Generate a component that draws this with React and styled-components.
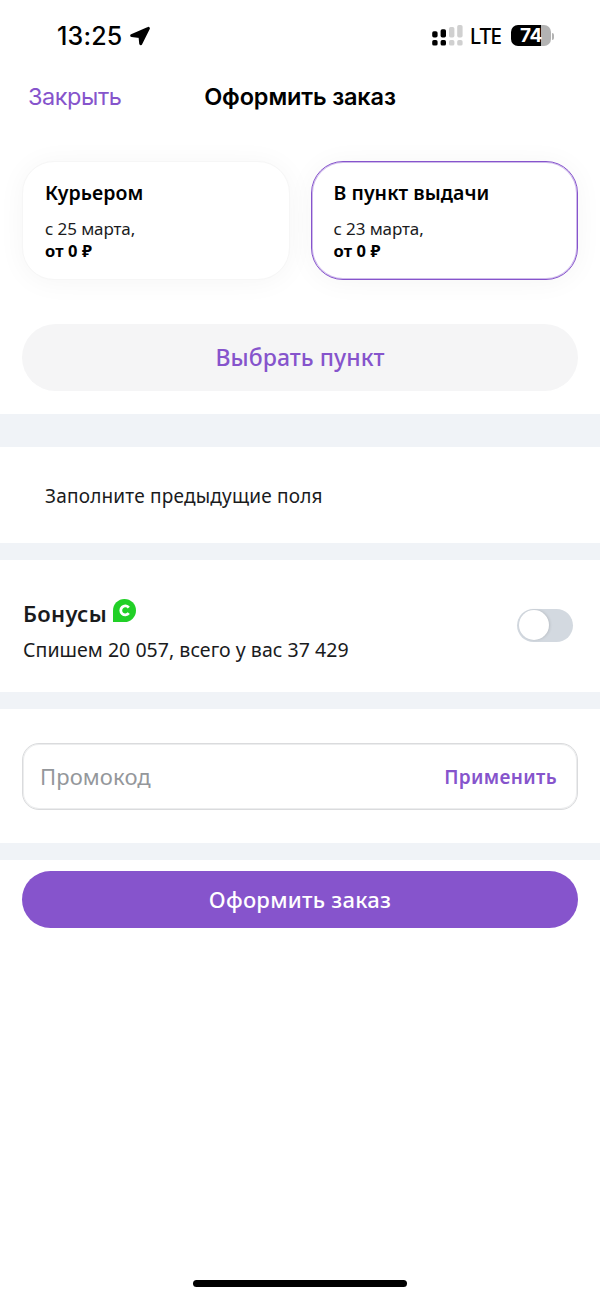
import { useState } from "react";
import styled, { createGlobalStyle } from "styled-components";

const deliveryOptions = [
    { id: "courier", title: "Курьером", date: "с 25 марта,", price: "от 0 ₽" },
    { id: "pickup", title: "В пункт выдачи", date: "с 23 марта,", price: "от 0 ₽" },
];

function StatusBar() {
    return (
        <StatusContainer>
            <StatusLeft>
                <Clock>13:25</Clock>
                <svg width="20" height="20" viewBox="0 0 20 20">
                    <path
                        d="M18.2 2 1.5 9.2c-.4.2-.3.8.2.8l7.9.9.7 6.9c.1.5.7.6.9.1L18.8 2.5c.1-.4-.2-.7-.6-.5Z"
                        fill="#000"
                        stroke="#000"
                        strokeWidth="2.1"
                        strokeLinejoin="round"
                    />
                </svg>
            </StatusLeft>

            <StatusRight>
                <svg width="31" height="22" viewBox="0 0 31 22">
                    <rect x="0.2" y="6.2" width="5.4" height="6.3" rx="1.7" />
                    <rect x="8.6" y="4.2" width="5.4" height="8.3" rx="1.7" />
                    <rect x="17" y="2" width="5.4" height="10.5" rx="1.7" fill="#d0d0d0" />
                    <rect x="25.2" y="0" width="5.4" height="12.5" rx="1.7" fill="#d0d0d0" />
                    <rect x="0.2" y="15" width="5.4" height="5.6" rx="1.7" />
                    <rect x="8.6" y="15" width="5.4" height="5.6" rx="1.7" />
                    <rect x="17" y="15" width="5.4" height="5.6" rx="1.7" fill="#d0d0d0" />
                    <rect x="25.2" y="15" width="5.4" height="5.6" rx="1.7" fill="#d0d0d0" />
                </svg>
                <Network>LTE</Network>
                <Battery>74</Battery>
                <BatteryCap />
            </StatusRight>
        </StatusContainer>
    );
}

function App() {
    const [delivery, setDelivery] = useState("pickup");
    const [useBonuses, setUseBonuses] = useState(false);
    const [promo, setPromo] = useState("");

    return (
        <Container>
            <GlobalStyle />

            <StatusBar />

            <Header>
                <CloseButton>Закрыть</CloseButton>
                <Title>Оформить заказ</Title>
            </Header>

            <DeliverySection>
                <Cards>
                    {deliveryOptions.map((option) => (
                        <Card
                            key={option.id}
                            $active={delivery === option.id}
                            onClick={() => setDelivery(option.id)}
                        >
                            <CardTitle>{option.title}</CardTitle>
                            <CardDate>{option.date}</CardDate>
                            <CardPrice>{option.price}</CardPrice>
                        </Card>
                    ))}
                </Cards>
                <PickButton>Выбрать пункт</PickButton>
            </DeliverySection>

            <Divider $height={33.5} />

            <Notice>Заполните предыдущие поля</Notice>

            <Divider $height={17} />

            <BonusSection>
                <BonusInfo>
                    <BonusTitle>
                        Бонусы
                        <svg width="23" height="23" viewBox="0 0 23 23">
                            <path d="M0 23V11.5A11.5 11.5 0 1 1 11.5 23Z" fill="#21d027" />
                            <path
                                d="M15.8 8.6A4.5 4.5 0 1 0 15.8 14.2"
                                fill="none"
                                stroke="#fff"
                                strokeWidth="2.8"
                            />
                        </svg>
                    </BonusTitle>
                    <BonusText>Спишем 20 057, всего у вас 37 429</BonusText>
                </BonusInfo>
                <Toggle $on={useBonuses} onClick={() => setUseBonuses(!useBonuses)}>
                    <Knob />
                </Toggle>
            </BonusSection>

            <Divider $height={17} />

            <PromoSection>
                <PromoField>
                    <PromoInput
                        placeholder="Промокод"
                        value={promo}
                        onChange={(e) => setPromo(e.target.value)}
                    />
                    <ApplyButton type="button">Применить</ApplyButton>
                </PromoField>
            </PromoSection>

            <Divider $height={17} />

            <Footer>
                <SubmitButton>Оформить заказ</SubmitButton>
            </Footer>

            <HomeIndicator />
        </Container>
    );
}

export default App;

const GlobalStyle = createGlobalStyle`
* {
    box-sizing: border-box;
}

body {
    margin: 0;
    background-color: white;
}

button, input {
    font-family: inherit;
    border: 0;
    padding: 0;
    background: none;
    outline: 0;
}
`;

const Container = styled.div`
width: 600px;
height: 1297px;
display: flex;
flex-direction: column;
overflow: hidden;
background-color: white;
color: #1a1b1d;
font-family: "Noto Sans", sans-serif;
`;

const StatusContainer = styled.div`
height: 72px;
flex-shrink: 0;
display: flex;
justify-content: space-between;
padding: 0 46px 0 57px;
color: black;
font-family: "Inter", sans-serif;
`;

const StatusLeft = styled.div`
display: flex;
align-items: center;
gap: 7px;
`;

const Clock = styled.span`
font-size: 25px;
font-weight: 550;
line-height: 30px;
letter-spacing: 0.2px;
`;

const StatusRight = styled.div`
display: flex;
align-items: center;
`;

const Network = styled.span`
margin-left: 7px;
padding-bottom: 1px;
font-family: "Noto Sans", sans-serif;
font-size: 21px;
font-weight: 500;
line-height: 26px;
letter-spacing: -1px;
`;

const Battery = styled.div`
width: 40px;
height: 21px;
margin: -1px 1px 0 10px;
border-radius: 7px;
background: linear-gradient(to right, black 74%, #b3b3b3 74%);
color: white;
font-size: 19px;
font-weight: 700;
line-height: 22px;
letter-spacing: -0.5px;
text-align: center;
`;

const BatteryCap = styled.div`
width: 2px;
height: 7px;
border-radius: 0 3px 3px 0;
background-color: #b3b3b3;
`;

const Header = styled.div`
height: 50px;
flex-shrink: 0;
display: grid;
grid-template-columns: 1fr auto 1fr;
align-items: center;
padding: 0 28px;
font-family: "Inter", sans-serif;
`;

const CloseButton = styled.button`
justify-self: start;
color: #8654cc;
font-size: 23.5px;
line-height: 30px;
letter-spacing: -0.45px;
`;

const Title = styled.h1`
margin: 0;
color: black;
font-size: 23.5px;
font-weight: 600;
line-height: 30px;
letter-spacing: -0.15px;
`;

const DeliverySection = styled.div`
height: 291.5px;
flex-shrink: 0;
padding: 38.5px 22px 0;
`;

const Cards = styled.div`
display: grid;
grid-template-columns: 1fr 1fr;
gap: 21px;
`;

const Card = styled.div`
height: 119px;
padding: 18px 22px 0;
border: 1px solid ${(props) => (props.$active ? "#8654cc" : "#f6f6f6")};
border-radius: 32px;
background-color: white;
box-shadow: 0 2px 28px rgba(0, 0, 0, 0.045),
    inset 0 0 0 1px ${(props) => (props.$active ? "rgba(134, 84, 204, 0.4)" : "transparent")};
`;

const CardTitle = styled.div`
color: black;
font-size: 19.5px;
font-weight: 600;
line-height: 26px;
letter-spacing: 0.05px;
`;

const CardDate = styled.div`
margin-top: 11px;
font-size: 17px;
line-height: 23px;
letter-spacing: -0.1px;
`;

const CardPrice = styled.div`
color: black;
font-size: 16.5px;
font-weight: 700;
line-height: 22px;
letter-spacing: 0.1px;
`;

const PickButton = styled.button`
display: block;
width: 100%;
height: 67px;
margin-top: 44.5px;
padding-bottom: 1px;
border-radius: 34px;
background-color: #f5f5f6;
color: #8654cc;
font-size: 23px;
font-weight: 500;
letter-spacing: 0.05px;
`;

const Divider = styled.div`
height: ${(props) => props.$height}px;
flex-shrink: 0;
background-color: #f0f3f7;
`;

const Notice = styled.div`
height: 95.5px;
flex-shrink: 0;
padding: 35px 45px 0;
font-size: 19px;
line-height: 28px;
letter-spacing: 0.2px;
`;

const BonusSection = styled.div`
height: 132.5px;
flex-shrink: 0;
display: flex;
justify-content: space-between;
padding: 39px 27px 0 23px;
`;

const BonusInfo = styled.div``;

const BonusTitle = styled.div`
display: flex;
gap: 6px;
font-size: 22px;
font-weight: 600;
line-height: 29px;
letter-spacing: 0.3px;
`;

const BonusText = styled.div`
margin-top: 8px;
font-size: 19.5px;
line-height: 28px;
letter-spacing: 0.04px;
`;

const Toggle = styled.button`
display: flex;
justify-content: ${(props) => (props.$on ? "flex-end" : "flex-start")};
align-items: center;
width: 56px;
height: 33px;
margin-top: 10px;
padding: 0 2px;
border-radius: 17px;
background-color: ${(props) => (props.$on ? "#21d027" : "#d3d9e0")};
`;

const Knob = styled.span`
width: 30px;
height: 30px;
border-radius: 50%;
background-color: white;
box-shadow: 1px 0 3px rgba(0, 0, 0, 0.12);
`;

const PromoSection = styled.div`
height: 134px;
flex-shrink: 0;
padding: 33.5px 22px 0;
`;

const PromoField = styled.form`
height: 67px;
display: flex;
align-items: center;
padding: 0 20px 0 17px;
border: 1px solid #dadbdd;
border-radius: 17px;
box-shadow: inset 0 0 0 1px rgba(218, 219, 221, 0.5);
`;

const PromoInput = styled.input`
flex: 1;
min-width: 0;
color: #1a1b1d;
font-size: 22px;
letter-spacing: 0.1px;

&::placeholder {
    color: #94979b;
    opacity: 1;
}
`;

const ApplyButton = styled.button`
padding-top: 1px;
color: #8654cc;
font-size: 19px;
font-weight: 600;
letter-spacing: 0.35px;
`;

const Footer = styled.div`
flex: 1;
padding: 11px 22px 0;
`;

const SubmitButton = styled.button`
display: block;
width: 100%;
height: 57px;
padding-bottom: 2px;
border-radius: 29px;
background-color: #8654cc;
color: white;
font-size: 22px;
font-weight: 550;
letter-spacing: 0.25px;
`;

const HomeIndicator = styled.div`
width: 214px;
height: 7px;
flex-shrink: 0;
margin: 0 auto 10px;
border-radius: 4px;
background-color: black;
`;
